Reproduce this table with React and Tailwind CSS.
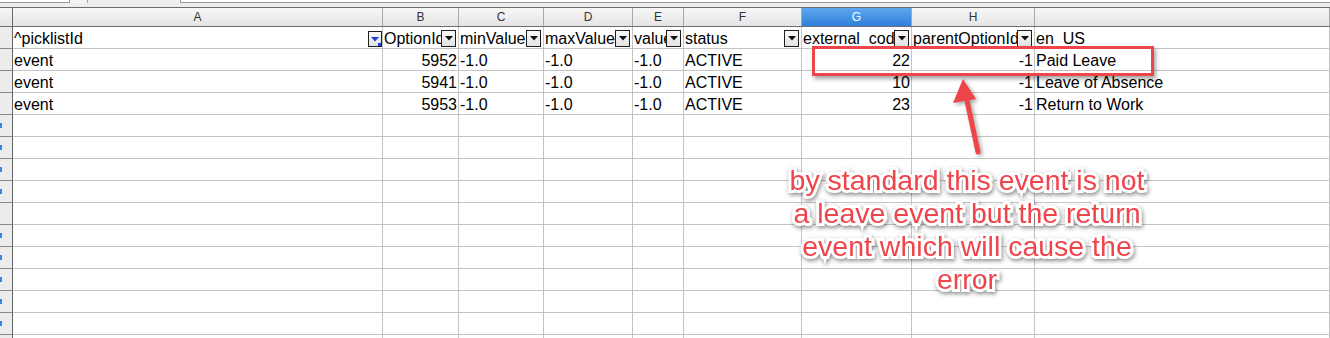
import React from 'react'

const cols = [
  { key: 'A', w: 'w-[370px]' },
  { key: 'B', w: 'w-[76px]' },
  { key: 'C', w: 'w-[85px]' },
  { key: 'D', w: 'w-[89px]' },
  { key: 'E', w: 'w-[51px]' },
  { key: 'F', w: 'w-[118px]' },
  { key: 'G', w: 'w-[110px]' },
  { key: 'H', w: 'w-[123px]' },
  { key: '', w: 'flex-1' },
]

const fields = ['^picklistId', 'OptionId', 'minValue', 'maxValue', 'value', 'status', 'external_code', 'parentOptionId', 'en_US']

const rows = [
  ['event', '5952', '-1.0', '-1.0', '-1.0', 'ACTIVE', '22', '-1', 'Paid Leave'],
  ['event', '5941', '-1.0', '-1.0', '-1.0', 'ACTIVE', '10', '-1', 'Leave of Absence'],
  ['event', '5953', '-1.0', '-1.0', '-1.0', 'ACTIVE', '23', '-1', 'Return to Work'],
]

const numeric = [1, 6, 7]
const TOTAL_ROWS = 15

function FilterButton({ active }) {
  return (
    <div
      className={`absolute bottom-px flex items-center justify-center border border-[#1e1e1e] bg-gradient-to-b from-[#fafafa] to-[#e2e2e2] ${
        active ? 'right-0 w-[14px] h-[16px]' : 'right-[2px] w-[15px] h-[17px]'
      }`}
    >
      <svg width="8" height="5" viewBox="0 0 8 5">
        <path d="M0 0 L8 0 L4 4.5 Z" fill={active ? '#1a3fd6' : '#111'} />
      </svg>
      {active && <div className="absolute right-0 bottom-0 w-[3px] h-[3px] bg-[#1a3fd6]" />}
    </div>
  )
}

function Cell({ col, children, right, className = '' }) {
  return (
    <div
      className={`relative h-[22px] shrink-0 overflow-hidden whitespace-nowrap border-r border-b border-[#c4c4c4] text-[16px] leading-[24px] text-black ${col.w} ${
        right ? 'text-right pr-px' : 'pl-px'
      } ${className}`}
    >
      {children}
    </div>
  )
}

export default function App() {
  const body = []
  for (let r = 0; r < TOTAL_ROWS; r++) {
    let values = []
    if (r === 0) values = fields
    else if (r <= rows.length) values = rows[r - 1]
    const mark = r >= 4 && r !== 8
    body.push(
      <div key={r} className="flex">
        <div className="h-[22px] w-[13px] shrink-0 border-r border-b border-r-[#666] border-b-[#8a8a8a] bg-[#ececec] flex items-center">
          {mark && <div className="w-[2px] h-[5px] bg-[#2f8ae0]" />}
        </div>
        {cols.map((c, i) => (
          <Cell key={i} col={c} right={r > 0 && numeric.includes(i)}>
            {values[i] || ''}
            {r === 0 && i < 8 && <FilterButton active={i === 0} />}
          </Cell>
        ))}
      </div>
    )
  }

  return (
    <div className="relative w-[1330px] h-[338px] overflow-hidden bg-white font-['Liberation_Sans',Arial,sans-serif]">
      {/* formula bar remnant */}
      <div className="h-[7px] bg-[#eeeeee] flex items-start">
        <div className="w-[88px] h-[3px] bg-white border-b border-r border-[#9a9a9a] relative">
          <div className="absolute right-0 top-0 w-[18px] h-[3px] border-l border-[#9a9a9a] bg-[#f4f4f4]" />
        </div>
        <div className="w-[92px]" />
        <div className="flex-1 h-[3px] bg-white border-b border-l border-[#9a9a9a]" />
      </div>
      <div className="h-px bg-[#6b6b6b]" />

      {/* column letters */}
      <div className="flex h-[19px] border-b border-[#6e6e6e]">
        <div className="w-[13px] shrink-0 border-r border-[#666] bg-gradient-to-b from-[#f6f6f6] to-[#e4e4e4]" />
        {cols.map((c, i) => (
          <div
            key={i}
            className={`shrink-0 ${c.w} border-r border-[#a8a8a8] text-center text-[12px] leading-[18px] ${
              c.key === 'G'
                ? 'bg-gradient-to-b from-[#5fa6ee] to-[#2d7fd9] text-white'
                : 'bg-gradient-to-b from-[#f7f7f7] to-[#e5e5e5] text-[#333]'
            }`}
          >
            {c.key}
          </div>
        ))}
      </div>

      {body}

      {/* annotation box */}
      <div className="absolute left-[812px] top-[46px] w-[342px] h-[30px] border-[3px] border-[#f0444b] shadow-[2px_3px_4px_rgba(0,0,0,0.35)]" />

      {/* arrow */}
      <svg className="absolute left-[940px] top-[70px] drop-shadow-[2px_2px_2px_rgba(0,0,0,0.35)]" width="60" height="95" viewBox="0 0 60 95">
        <line x1="38" y1="82" x2="26" y2="26" stroke="#f0444b" strokeWidth="5" strokeLinecap="round" />
        <polygon points="23,9 36,29 13,33" fill="#f0444b" />
      </svg>

      {/* annotation text */}
      <div className="absolute left-[727px] top-[164px] w-[480px] text-center text-[28.5px] leading-[33px] text-[#f0444b] [-webkit-text-stroke:6px_white] [paint-order:stroke_fill] drop-shadow-[1px_2px_2px_rgba(0,0,0,0.45)]">
        by standard this event is not
        <br />
        a leave event but the return
        <br />
        event which will cause the
        <br />
        error
      </div>
    </div>
  )
}
